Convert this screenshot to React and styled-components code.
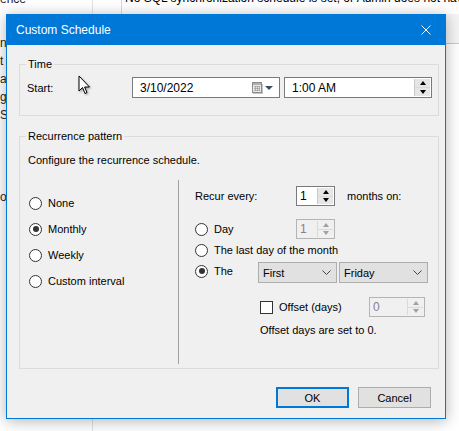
import styled, { createGlobalStyle } from "styled-components";

const GlobalStyle = createGlobalStyle`
  html, body {
    margin: 0;
    padding: 0;
  }
  body {
    width: 459px;
    height: 431px;
    overflow: hidden;
    background: #fff;
    font-family: "Liberation Sans", Arial, sans-serif;
    font-size: 11px;
    color: #000;
  }
`;

const Desktop = styled.div`
  position: relative;
  width: 459px;
  height: 431px;
  overflow: hidden;
  background: #fff;
  display: grid;
  grid-template-columns: 93px 1fr;
`;

const Sidebar = styled.div`
  display: flex;
  flex-direction: column;
  border-right: 1px solid #e3e3e3;
  overflow: hidden;
`;

const SideItem = styled.div`
  height: 18px;
  line-height: 18px;
  margin-top: ${(p) => p.$gap || 0}px;
  color: #2a1c1c;
  white-space: nowrap;
  font-size: 12px;
`;

const MainArea = styled.div`
  display: flex;
  flex-direction: column;
`;

const MainHeader = styled.div`
  height: 14px;
  display: flex;
  overflow: hidden;
`;

const HeaderGap = styled.div`
  width: 28px;
  flex: none;
  border-right: 1px solid #dadada;
`;

const HeaderText = styled.div`
  margin-top: -10px;
  padding-left: 3px;
  line-height: 16px;
  font-size: 12px;
  white-space: nowrap;
`;

const TableHead = styled.div`
  height: 29px;
  border-bottom: 1px solid #c9c9c9;
  background: #f4f4f4;
`;

const Cursor = styled.svg`
  position: absolute;
  left: 78px;
  top: 75px;
  width: 13px;
  height: 20px;
  filter: drop-shadow(1px 1px 1px rgba(0, 0, 0, 0.35));
  z-index: 5;
`;

const Dialog = styled.div`
  position: absolute;
  left: 6px;
  top: 14px;
  width: 440px;
  height: 405px;
  box-sizing: border-box;
  border: 1px solid #0078d7;
  background: #f0f0f0;
  box-shadow: 0 2px 14px rgba(0, 0, 0, 0.3);
  display: flex;
  flex-direction: column;
`;

const TitleBar = styled.div`
  height: 29px;
  flex: none;
  background: #0078d7;
  color: #fff;
  display: flex;
  align-items: center;
  justify-content: space-between;
  padding: 0 9px 1px 9px;
`;

const Title = styled.span`
  font-size: 12px;
`;

const CloseIcon = styled.svg`
  width: 10px;
  height: 10px;
  margin-right: 5px;
`;

const DialogBody = styled.div`
  flex: 1;
  display: flex;
  flex-direction: column;
  padding: 11px 6px 0 12px;
`;

const GroupBox = styled.fieldset`
  margin: ${(p) => p.$top || 0}px 0 0 0;
  padding: 0 0 ${(p) => p.$bottom || 0}px 0;
  border: 1px solid #dcdcdc;
  min-width: 0;
`;

const Legend = styled.legend`
  margin-left: 6px;
  padding: 0 2px 0 2px;
  line-height: 16px;
`;

const Row = styled.div`
  display: flex;
  align-items: center;
  height: ${(p) => p.$h || 21}px;
  margin-top: ${(p) => p.$top || 0}px;
  padding-left: ${(p) => p.$left || 0}px;
`;

const FieldLabel = styled.span`
  width: ${(p) => p.$w}px;
  flex: none;
`;

const TextBox = styled.div`
  box-sizing: border-box;
  width: ${(p) => p.$w}px;
  height: ${(p) => p.$h || 21}px;
  margin-left: ${(p) => p.$ml || 0}px;
  border: 1px solid ${(p) => (p.$disabled ? "#b4b4b4" : "#7a7a7a")};
  background: ${(p) => (p.$disabled ? "#f0f0f0" : "#fff")};
  color: ${(p) => (p.$disabled ? "#8a7d91" : "#000")};
  display: flex;
  align-items: center;
  padding-left: ${(p) => p.$pl || 3}px;
  flex: none;
`;

const Value = styled.span`
  flex: 1;
  white-space: nowrap;
  font-size: ${(p) => (p.$big ? 12 : 11)}px;
`;

const Spin = styled.div`
  width: 15px;
  align-self: stretch;
  margin: 1px 1px 1px 0;
  display: flex;
  flex-direction: column;
  border-left: 1px solid ${(p) => (p.$disabled ? "#dadada" : "#c9c9c9")};
  background: ${(p) => (p.$disabled ? "#f0f0f0" : "#e6e6e6")};
`;

const SpinHalf = styled.div`
  flex: 1;
  display: flex;
  align-items: center;
  justify-content: center;
  & + & {
    border-top: 1px solid ${(p) => (p.$disabled ? "#dadada" : "#c9c9c9")};
  }
`;

const Arrow = styled.div`
  width: 0;
  height: 0;
  border-left: 3.5px solid transparent;
  border-right: 3.5px solid transparent;
  ${(p) =>
    p.$up
      ? `border-bottom: 4px solid ${p.$disabled ? "#a0a0a0" : "#000"};`
      : `border-top: 4px solid ${p.$disabled ? "#a0a0a0" : "#000"};`}
`;

const CalendarIcon = styled.svg`
  width: 11px;
  height: 12px;
  margin-right: 2px;
`;

const DropArrow = styled.div`
  width: 0;
  height: 0;
  margin-right: 6px;
  border-left: 4px solid transparent;
  border-right: 4px solid transparent;
  border-top: 4px solid #3e4a5d;
`;

const Description = styled.div`
  margin: 8px 0 0 8px;
  line-height: 16px;
`;

const Columns = styled.div`
  display: grid;
  grid-template-columns: 159px 1fr;
  margin-top: 12px;
  height: 184px;
`;

const LeftColumn = styled.div`
  border-right: 1px solid #a0a0a0;
  padding: 10px 0 0 9px;
  display: flex;
  flex-direction: column;
`;

const RightColumn = styled.div`
  padding: 6px 0 0 16px;
  display: flex;
  flex-direction: column;
`;

const OptionRow = styled.label`
  display: flex;
  align-items: center;
  height: ${(p) => p.$h || 26}px;
  width: ${(p) => (p.$w ? `${p.$w}px` : "auto")};
  margin-top: ${(p) => p.$top || 0}px;
  align-self: ${(p) => (p.$raised ? "flex-start" : "auto")};
  gap: 6px;
  flex: none;
`;

const Radio = styled.span`
  box-sizing: border-box;
  width: 13px;
  height: 13px;
  border-radius: 50%;
  border: 1px solid #333;
  background: #fff;
  display: flex;
  align-items: center;
  justify-content: center;
  flex: none;
  &::after {
    content: "";
    width: 6px;
    height: 6px;
    border-radius: 50%;
    background: ${(p) => (p.$checked ? "#333" : "transparent")};
  }
`;

const CheckBox = styled.span`
  box-sizing: border-box;
  width: 13px;
  height: 13px;
  border: 1px solid #333;
  background: #fff;
  flex: none;
`;

const Combo = styled.div`
  box-sizing: border-box;
  width: ${(p) => p.$w}px;
  height: 21px;
  margin-left: ${(p) => p.$ml || 0}px;
  border: 1px solid #adadad;
  background: #e1e1e1;
  display: flex;
  align-items: center;
  padding: 0 5px 0 4px;
  flex: none;
`;

const Chevron = styled.svg`
  width: 9px;
  height: 5px;
`;

const Months = styled.span`
  margin-left: 12px;
`;

const Note = styled.div`
  margin: 5px 0 0 65px;
  line-height: 16px;
`;

const ButtonRow = styled.div`
  display: flex;
  justify-content: flex-end;
  gap: 9px;
  margin: 18px 8px 0 0;
`;

const Button = styled.button`
  box-sizing: border-box;
  width: 73px;
  height: 21px;
  padding: 0;
  font: inherit;
  font-size: 11px;
  color: #000;
  background: #e1e1e1;
  border: ${(p) => (p.$default ? "2px solid #0078d7" : "1px solid #adadad")};
`;

function SpinBox({ disabled }) {
  return (
    <Spin $disabled={disabled}>
      <SpinHalf $disabled={disabled}>
        <Arrow $up $disabled={disabled} />
      </SpinHalf>
      <SpinHalf $disabled={disabled}>
        <Arrow $disabled={disabled} />
      </SpinHalf>
    </Spin>
  );
}

function DownChevron() {
  return (
    <Chevron viewBox="0 0 9 5">
      <path d="M0.5 0.5 L4.5 4.5 L8.5 0.5" fill="none" stroke="#444" strokeWidth="1" />
    </Chevron>
  );
}

const sideItems = ["n", "t", "a", "g", "S"];

export default function App() {
  return (
    <>
      <GlobalStyle />
      <Desktop>
        <Sidebar>
          <SideItem $gap={-10}>ence</SideItem>
          {sideItems.map((t, i) => (
            <SideItem key={t} $gap={i === 0 ? 26 : 0}>
              {t}
            </SideItem>
          ))}
          <SideItem $gap={64}>o</SideItem>
        </Sidebar>
        <MainArea>
          <MainHeader>
            <HeaderGap />
            <HeaderText>
              No SQL synchronization schedule is set, or Admin does not have same
            </HeaderText>
          </MainHeader>
          <TableHead />
        </MainArea>

        <Dialog>
          <TitleBar>
            <Title>Custom Schedule</Title>
            <CloseIcon viewBox="0 0 10 10">
              <path d="M0.5 0.5 L9.5 9.5 M9.5 0.5 L0.5 9.5" stroke="#fff" strokeWidth="1" />
            </CloseIcon>
          </TitleBar>
          <DialogBody>
            <GroupBox $bottom={17}>
              <Legend>Time</Legend>
              <Row $top={5} $left={7}>
                <FieldLabel $w={105}>Start:</FieldLabel>
                <TextBox $w={148} $pl={7}>
                  <Value $big>3/10/2022</Value>
                  <CalendarIcon viewBox="0 0 11 12">
                    <rect x="0.5" y="0.5" width="9" height="10" fill="#e8e8e8" stroke="#8c8c8c" />
                    <rect x="1" y="1" width="8" height="2" fill="#b0b0b0" />
                    <path
                      d="M2 4.5h6M2 6.5h6M2 8.5h6M3.5 4v5M5.5 4v5M7.5 4v5"
                      stroke="#a3a3a3"
                      strokeWidth="0.8"
                    />
                    <path d="M10.5 2v10M1 11.5h10" stroke="#c4c4c4" />
                  </CalendarIcon>
                  <DropArrow />
                </TextBox>
                <TextBox $w={148} $ml={4} $pl={7}>
                  <Value $big>1:00 AM</Value>
                  <SpinBox />
                </TextBox>
              </Row>
            </GroupBox>

            <GroupBox $top={12} $bottom={4}>
              <Legend>Recurrence pattern</Legend>
              <Description>Configure the recurrence schedule.</Description>
              <Columns>
                <LeftColumn>
                  <OptionRow>
                    <Radio />
                    None
                  </OptionRow>
                  <OptionRow>
                    <Radio $checked />
                    Monthly
                  </OptionRow>
                  <OptionRow>
                    <Radio />
                    Weekly
                  </OptionRow>
                  <OptionRow>
                    <Radio />
                    Custom interval
                  </OptionRow>
                </LeftColumn>
                <RightColumn>
                  <Row $h={20}>
                    <FieldLabel $w={101}>Recur every:</FieldLabel>
                    <TextBox $w={39} $h={20}>
                      <Value $big>1</Value>
                      <SpinBox />
                    </TextBox>
                    <Months>months on:</Months>
                  </Row>
                  <Row $h={20} $top={13}>
                    <OptionRow $h={20} $w={101}>
                      <Radio />
                      Day
                    </OptionRow>
                    <TextBox $w={39} $h={20} $disabled>
                      <Value $big>1</Value>
                      <SpinBox disabled />
                    </TextBox>
                  </Row>
                  <OptionRow $h={18} $top={2}>
                    <Radio />
                    The last day of the month
                  </OptionRow>
                  <Row $h={21} $top={3}>
                    <OptionRow $h={18} $w={63} $raised>
                      <Radio $checked />
                      The
                    </OptionRow>
                    <Combo $w={79}>
                      <Value>First</Value>
                      <DownChevron />
                    </Combo>
                    <Combo $w={89} $ml={2}>
                      <Value>Friday</Value>
                      <DownChevron />
                    </Combo>
                  </Row>
                  <Row $h={20} $top={14} $left={65}>
                    <OptionRow $h={20} $w={109}>
                      <CheckBox />
                      Offset (days)
                    </OptionRow>
                    <TextBox $w={56} $h={20} $disabled>
                      <Value $big>0</Value>
                      <SpinBox disabled />
                    </TextBox>
                  </Row>
                  <Note>Offset days are set to 0.</Note>
                </RightColumn>
              </Columns>
            </GroupBox>

            <ButtonRow>
              <Button $default>OK</Button>
              <Button>Cancel</Button>
            </ButtonRow>
          </DialogBody>
        </Dialog>

        <Cursor viewBox="0 0 13 20">
          <path
            d="M1 1 L1 16 L4.5 12.5 L7 18.5 L9 17.6 L6.6 12 L11.5 12 Z"
            fill="#fff"
            stroke="#000"
            strokeWidth="1"
            strokeLinejoin="round"
          />
        </Cursor>
      </Desktop>
    </>
  );
}
